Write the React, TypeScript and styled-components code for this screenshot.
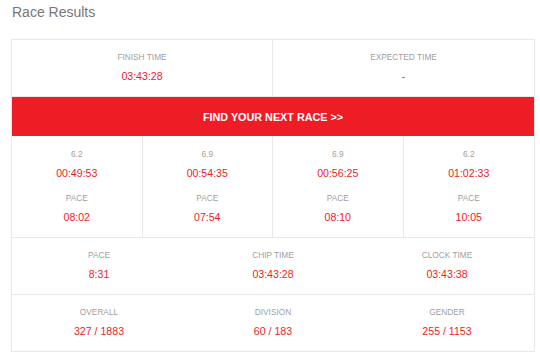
import React from "react";
import styled, { createGlobalStyle } from "styled-components";

const GlobalStyle = createGlobalStyle`
  body {
    margin: 0;
    background: #ffffff;
    font-family: "Liberation Sans", Arial, sans-serif;
  }
`;

const Page = styled.div`
  padding: 4px 5px 0 11px;
`;

const Title = styled.h2`
  margin: 0 0 19px 1px;
  font-size: 14px;
  line-height: 16px;
  font-weight: normal;
  color: #777777;
`;

const Card = styled.div`
  width: 524px;
  box-sizing: border-box;
  border: 1px solid #e8e8e8;
`;

const Row = styled.div<{ $cols: number; $divided?: boolean }>`
  display: grid;
  grid-template-columns: repeat(${(p) => p.$cols}, 1fr);
  border-bottom: 1px solid #e8e8e8;

  &:last-child {
    border-bottom: none;
  }

  & > div {
    border-right: ${(p) => (p.$divided ? "1px solid #e8e8e8" : "none")};
  }

  & > div:last-child {
    border-right: none;
  }
`;

const Cell = styled.div<{ $pt?: number }>`
  display: flex;
  flex-direction: column;
  align-items: center;
  padding: ${(p) => p.$pt ?? 11}px 0 13px;
`;

const Label = styled.div<{ $gap?: number }>`
  font-size: 8.3px;
  line-height: 12px;
  color: #a0a0a0;
  text-transform: uppercase;
  margin-top: ${(p) => p.$gap ?? 0}px;
`;

const Value = styled.div`
  font-size: 10.6px;
  line-height: 14px;
  color: #ee1c25;
  margin-top: 6px;
`;

const Banner = styled.a`
  display: flex;
  align-items: center;
  justify-content: center;
  height: 39px;
  background: #ee1c25;
  color: #ffffff;
  font-weight: bold;
  font-size: 10.8px;
  text-decoration: none;
`;

const splits = [
  { dist: "6.2", time: "00:49:53", pace: "08:02" },
  { dist: "6.9", time: "00:54:35", pace: "07:54" },
  { dist: "6.9", time: "00:56:25", pace: "08:10" },
  { dist: "6.2", time: "01:02:33", pace: "10:05" },
];

const summary = [
  { label: "Pace", value: "8:31" },
  { label: "Chip Time", value: "03:43:28" },
  { label: "Clock Time", value: "03:43:38" },
];

const places = [
  { label: "Overall", value: "327 / 1883" },
  { label: "Division", value: "60 / 183" },
  { label: "Gender", value: "255 / 1153" },
];

export default function App() {
  return (
    <Page>
      <GlobalStyle />
      <Title>Race Results</Title>
      <Card>
        <Row $cols={2} $divided>
          <Cell>
            <Label>Finish Time</Label>
            <Value>03:43:28</Value>
          </Cell>
          <Cell>
            <Label>Expected Time</Label>
            <Value>-</Value>
          </Cell>
        </Row>
        <Banner href="#">FIND YOUR NEXT RACE &gt;&gt;</Banner>
        <Row $cols={4} $divided>
          {splits.map((s, i) => (
            <Cell key={i} $pt={12}>
              <Label>{s.dist}</Label>
              <Value>{s.time}</Value>
              <Label $gap={12}>Pace</Label>
              <Value>{s.pace}</Value>
            </Cell>
          ))}
        </Row>
        <Row $cols={3}>
          {summary.map((s) => (
            <Cell key={s.label}>
              <Label>{s.label}</Label>
              <Value>{s.value}</Value>
            </Cell>
          ))}
        </Row>
        <Row $cols={3}>
          {places.map((s) => (
            <Cell key={s.label}>
              <Label>{s.label}</Label>
              <Value>{s.value}</Value>
            </Cell>
          ))}
        </Row>
      </Card>
    </Page>
  );
}
